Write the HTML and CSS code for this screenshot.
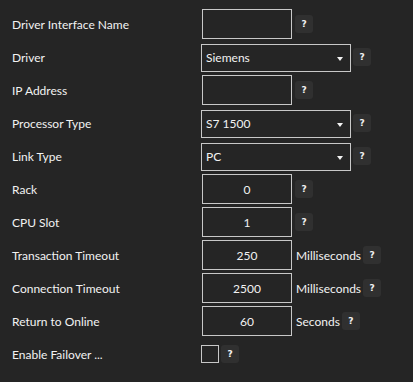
FILE: index.html
```html
<!DOCTYPE html>
<html lang="en">
<head>
    <meta charset="UTF-8">
    <meta name="viewport" content="width=device-width, initial-scale=1.0">
    <title>Driver Settings</title>
    <link rel="stylesheet" href="styles.css">
</head>
<body>
    <div class="settings">
        <div class="row">
            <label class="label">Driver Interface Name</label>
            <input type="text" class="field">
            <span class="help">?</span>
        </div>
        <div class="row">
            <label class="label">Driver</label>
            <div class="select">Siemens<span class="arrow"></span></div>
            <span class="help">?</span>
        </div>
        <div class="row">
            <label class="label">IP Address</label>
            <input type="text" class="field">
            <span class="help">?</span>
        </div>
        <div class="row">
            <label class="label">Processor Type</label>
            <div class="select">S7 1500<span class="arrow"></span></div>
            <span class="help">?</span>
        </div>
        <div class="row">
            <label class="label">Link Type</label>
            <div class="select">PC<span class="arrow"></span></div>
            <span class="help">?</span>
        </div>
        <div class="row">
            <label class="label">Rack</label>
            <input type="text" class="field num" value="0">
            <span class="help">?</span>
        </div>
        <div class="row">
            <label class="label">CPU Slot</label>
            <input type="text" class="field num" value="1">
            <span class="help">?</span>
        </div>
        <div class="row">
            <label class="label">Transaction Timeout</label>
            <input type="text" class="field num" value="250">
            <span class="unit">Milliseconds</span>
            <span class="help">?</span>
        </div>
        <div class="row">
            <label class="label">Connection Timeout</label>
            <input type="text" class="field num" value="2500">
            <span class="unit">Milliseconds</span>
            <span class="help">?</span>
        </div>
        <div class="row">
            <label class="label">Return to Online</label>
            <input type="text" class="field num" value="60">
            <span class="unit">Seconds</span>
            <span class="help">?</span>
        </div>
        <div class="row">
            <label class="label">Enable Failover ...</label>
            <span class="check"></span>
            <span class="help">?</span>
        </div>
    </div>
</body>
</html>
```

FILE: styles.css
```css
body {
    margin: 0;
    background-color: #252525;
    color: #f2f2f2;
    font-family: Lato, "Noto Sans", sans-serif;
    font-size: 12px;
}

.settings {
    padding: 9px 0 0 12px;
}

.row {
    display: flex;
    align-items: center;
    height: 30px;
    margin-bottom: 3px;
}

.label {
    width: 189px;
    flex-shrink: 0;
}

.field {
    width: 90px;
    height: 30px;
    margin: 0 1px;
    padding: 0 4px;
    border: 1px solid #c8c8c8;
    background-color: #252525;
    color: #f2f2f2;
    font-family: inherit;
    font-size: 12px;
    box-sizing: border-box;
    outline: none;
}

.field.num {
    text-align: center;
}

.select {
    align-self: flex-end;
    position: relative;
    width: 150px;
    height: 28px;
    line-height: 26px;
    padding: 0 4px;
    border: 1px solid #c8c8c8;
    box-sizing: border-box;
}

.arrow {
    position: absolute;
    right: 7px;
    top: 12px;
    border-left: 3.5px solid transparent;
    border-right: 3.5px solid transparent;
    border-top: 4px solid #f2f2f2;
}

.check {
    width: 18px;
    height: 18px;
    border: 1px solid #c8c8c8;
    box-sizing: border-box;
}

.unit {
    margin-left: 3px;
}

.help {
    width: 18px;
    height: 18px;
    margin-left: 2px;
    border-radius: 3px;
    background-color: #303030;
    font-family: "DejaVu Sans", sans-serif;
    font-size: 9px;
    font-weight: bold;
    line-height: 18px;
    text-align: center;
}
```
